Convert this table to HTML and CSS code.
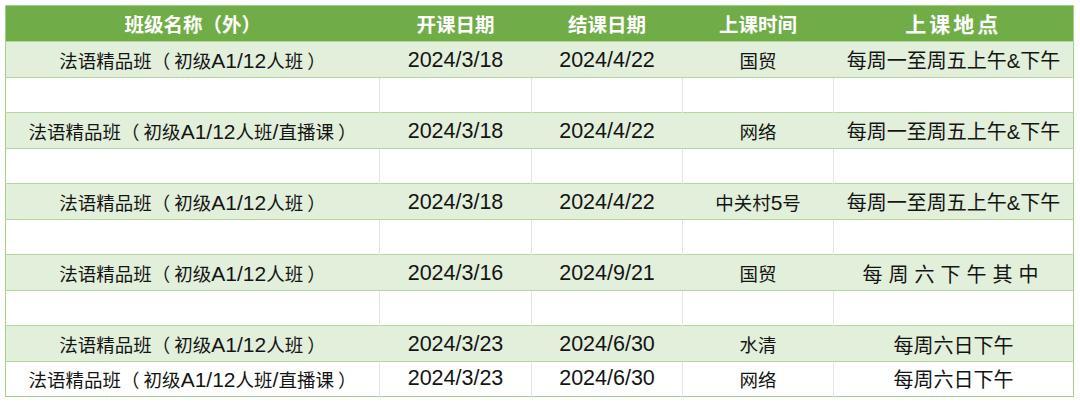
FILE: index.html
```html
<!DOCTYPE html>
<html lang="zh-CN">
<head>
<meta charset="utf-8">
<link rel="stylesheet" href="styles.css">
</head>
<body>
<table class="sched">
  <colgroup>
    <col class="c1"><col class="c2"><col class="c3"><col class="c4"><col class="c5">
  </colgroup>
  <thead>
    <tr class="head">
      <th>班级名称（外）</th>
      <th>开课日期</th>
      <th>结课日期</th>
      <th>上课时间</th>
      <th class="wide">上课地点</th>
    </tr>
  </thead>
  <tbody>
    <tr class="g">
      <td class="name">法语精品班<span class="po">（</span>初级<span class="lat">A1/12</span>人班<span class="pc">）</span></td>
      <td class="date">2024/3/18</td>
      <td class="date">2024/4/22</td>
      <td class="place">国贸</td>
      <td class="when">每周一至周五上午<span class="lat">&amp;</span>下午</td>
    </tr>
    <tr class="w"><td></td><td></td><td></td><td></td><td></td></tr>
    <tr class="g">
      <td class="name">法语精品班<span class="po">（</span>初级<span class="lat">A1/12</span>人班<span class="lat">/</span>直播课<span class="pc">）</span></td>
      <td class="date">2024/3/18</td>
      <td class="date">2024/4/22</td>
      <td class="place">网络</td>
      <td class="when">每周一至周五上午<span class="lat">&amp;</span>下午</td>
    </tr>
    <tr class="w"><td></td><td></td><td></td><td></td><td></td></tr>
    <tr class="g">
      <td class="name">法语精品班<span class="po">（</span>初级<span class="lat">A1/12</span>人班<span class="pc">）</span></td>
      <td class="date">2024/3/18</td>
      <td class="date">2024/4/22</td>
      <td class="place">中关村<span class="lat">5</span>号</td>
      <td class="when">每周一至周五上午<span class="lat">&amp;</span>下午</td>
    </tr>
    <tr class="w"><td></td><td></td><td></td><td></td><td></td></tr>
    <tr class="g">
      <td class="name">法语精品班<span class="po">（</span>初级<span class="lat">A1/12</span>人班<span class="pc">）</span></td>
      <td class="date">2024/3/16</td>
      <td class="date">2024/9/21</td>
      <td class="place">国贸</td>
      <td class="when spaced">每周六下午其中</td>
    </tr>
    <tr class="w"><td></td><td></td><td></td><td></td><td></td></tr>
    <tr class="g">
      <td class="name">法语精品班<span class="po">（</span>初级<span class="lat">A1/12</span>人班<span class="pc">）</span></td>
      <td class="date">2024/3/23</td>
      <td class="date">2024/6/30</td>
      <td class="place">水清</td>
      <td class="when">每周六日下午</td>
    </tr>
    <tr class="w last">
      <td class="name">法语精品班<span class="po">（</span>初级<span class="lat">A1/12</span>人班<span class="lat">/</span>直播课<span class="pc">）</span></td>
      <td class="date">2024/3/23</td>
      <td class="date">2024/6/30</td>
      <td class="place">网络</td>
      <td class="when">每周六日下午</td>
    </tr>
  </tbody>
</table>
</body>
</html>
```

FILE: styles.css
```css
html, body {
  margin: 0;
  padding: 0;
  background: #ffffff;
}

body {
  padding: 5px 0 0 5px;
  font-family: "Noto Sans CJK SC", "Liberation Sans", sans-serif;
  color: #141414;
}

.sched {
  border-collapse: collapse;
  table-layout: fixed;
  width: 1068px;
  border: 1px solid #a3cf8a;
}

.c1 { width: 374px; }
.c2 { width: 152px; }
.c3 { width: 151px; }
.c4 { width: 151px; }
.c5 { width: 240px; }

.head {
  height: 36px;
  background: #70ad47;
}

.head th {
  padding: 0;
  color: #ffffff;
  font-size: 19.5px;
  font-weight: bold;
  text-align: center;
  border: none;
  line-height: 1;
}

.head th.wide {
  letter-spacing: 3px;
  font-size: 21px;
}

td {
  padding: 0;
  text-align: center;
  white-space: nowrap;
  line-height: 1;
  font-size: 18px;
}

.g {
  height: 36px;
  background: #e2efda;
}

.g td {
  border-top: 1px solid #b3d79d;
  border-bottom: 1px solid #b3d79d;
  border-left: 1px solid #e2efda;
  padding-top: 2px;
}

.w {
  height: 35px;
  background: #ffffff;
}

.w td {
  border-left: 1px solid #e4e4e4;
}

.w td:first-child,
.g td:first-child {
  border-left: none;
}

.name {
  font-size: 18.5px;
}

.po {
  margin-right: 4px;
}

.pc {
  margin-left: 4px;
}

.lat {
  font-family: "Liberation Sans", sans-serif;
  font-size: 21px;
}

.date {
  font-family: "Liberation Sans", sans-serif;
  font-size: 21.5px;
}

.place {
  font-size: 18.5px;
}

.when {
  font-size: 20px;
}

.when .lat {
  font-size: 20px;
}

.spaced {
  letter-spacing: 6px;
}
```
